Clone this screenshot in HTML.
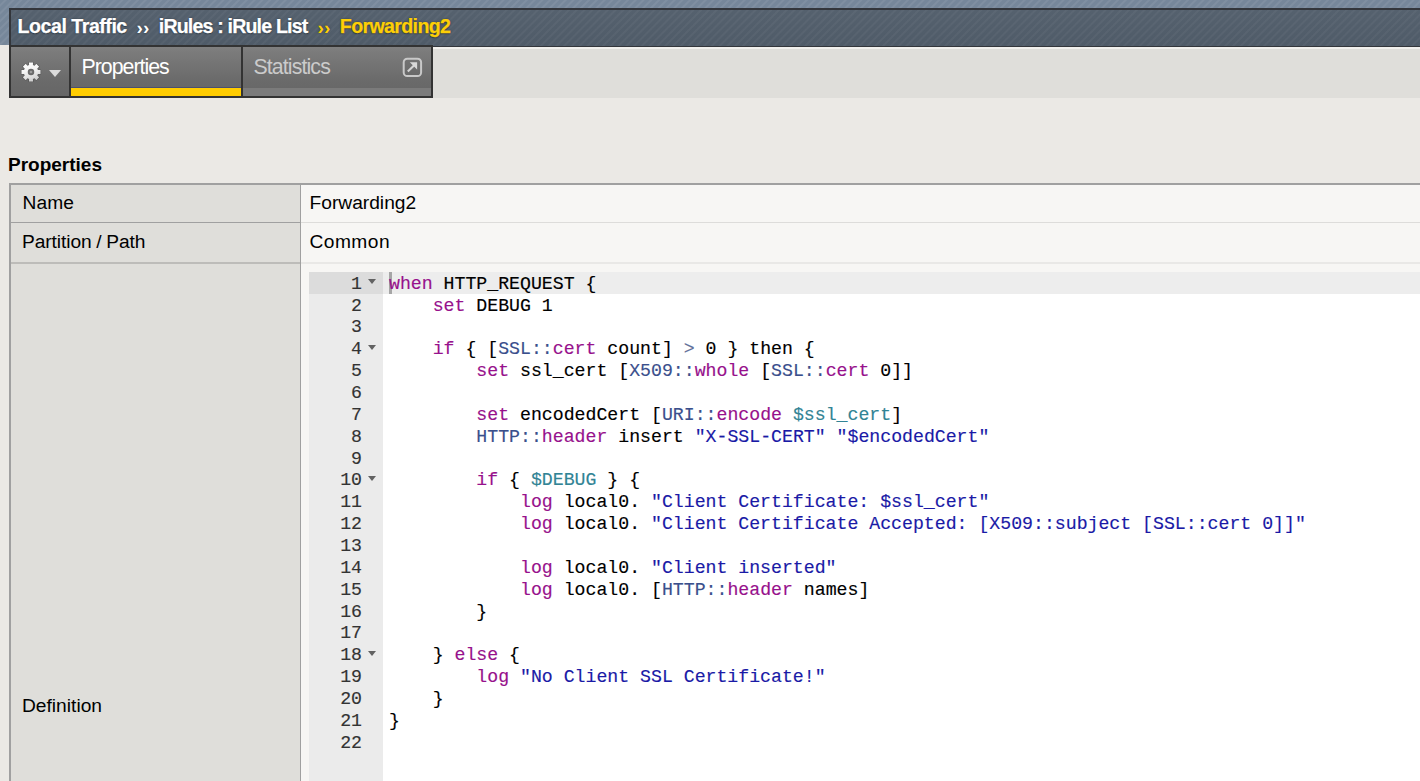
<!DOCTYPE html>
<html>
<head>
<meta charset="utf-8">
<title>iRule Properties</title>
<style>
html,body{margin:0;padding:0;}
html{overflow:hidden;}
body{width:1420px;height:781px;overflow:hidden;position:relative;background:#ebe9e5;font-family:"Liberation Sans",sans-serif;color:#000;}
.abs{position:absolute;}
/* top striped background */
#topbg{left:0;top:0;width:1420px;height:45px;background-color:#76879a;
 background-image:repeating-linear-gradient(135deg,rgba(255,255,255,0) 0,rgba(255,255,255,0) 2.5px,rgba(255,255,255,.07) 3.5px,rgba(255,255,255,.07) 4.5px,rgba(255,255,255,0) 5.5px);}
#titlebar{left:9px;top:8px;width:1420px;height:36px;border:2px solid #33363b;border-right:none;box-sizing:content-box;
 background-color:#525e6b;
 background-image:repeating-linear-gradient(135deg,rgba(255,255,255,0) 0,rgba(255,255,255,0) 2.5px,rgba(255,255,255,.04) 3.5px,rgba(255,255,255,.04) 4.5px,rgba(255,255,255,0) 5.5px),linear-gradient(#55616e,#4f5b68);}
.crumb{-webkit-text-stroke:0.25px currentColor;text-shadow:0 0 2px #2e3944,0 1px 1px #2e3944;top:14px;height:24px;line-height:24px;font-weight:bold;font-size:19.6px;white-space:nowrap;color:#fff;letter-spacing:-0.75px;}
.crumb.y{color:#fdcf06;}
.sep{text-shadow:0 0 2px #2e3944;top:15.5px;height:24px;line-height:24px;font-weight:bold;font-size:19px;white-space:nowrap;color:#fff;letter-spacing:0.2px;}
.sep.y{color:#fdcf06;}
/* tab strip */
#tabstrip{left:11px;top:47px;width:1409px;height:51px;background:#dfdeda;border-top:2px solid #f1f0ed;box-sizing:border-box;}
#tabs{left:9px;top:45px;width:424px;height:53px;background:#333;}
.tab{top:2px;height:49px;background:linear-gradient(#808080 0,#7b7b7b 10%,#6a6a6a 70%,#666 100%);}
.tab .lbl{position:absolute;top:8.1px;font-size:21.3px;line-height:24px;white-space:nowrap;letter-spacing:-0.98px;}
.tab .bar{position:absolute;left:0;right:0;bottom:0;height:8px;}
/* properties */
#ptitle{left:8px;top:153px;font-weight:bold;font-size:19px;line-height:24px;white-space:nowrap;}
#tbl{left:9px;top:183px;width:1420px;height:700px;background:#a0a0a0;}
.lc{position:absolute;left:2px;width:289px;background:#dfdeda;}
.vc{position:absolute;left:292px;width:1130px;background:#f7f6f4;}
.ct{position:absolute;font-size:19.2px;line-height:24px;white-space:nowrap;}
/* editor */
#gutter{left:309px;top:272px;width:74px;height:520px;background:#ebebeb;}
#editor{left:383px;top:272px;width:1040px;height:520px;background:#fff;}
.ln,.cl{position:absolute;height:21.857px;line-height:21.857px;font-family:"Liberation Mono",monospace;font-size:18.2px;white-space:pre;-webkit-text-stroke:0.15px currentColor;}
.ln{left:0;width:53px;text-align:right;color:#333;}
.cl{left:6px;color:#000;}
.k{color:#97118c;}
.f{color:#3a4f8c;}
.s{color:#1a1aa6;}
.v{color:#318495;}
.o{color:#5f6f9a;}
.fold{position:absolute;left:59px;width:0;height:0;border-left:4.5px solid transparent;border-right:4.5px solid transparent;border-top:5.5px solid #626262;}
</style>
</head>
<body>
<div id="topbg" class="abs"></div>
<div id="titlebar" class="abs"></div>
<div class="abs crumb" style="left:17.6px;letter-spacing:-0.48px" id="c1">Local Traffic</div>
<div class="abs sep" style="left:136.5px" id="s1">&#8250;&#8250;</div>
<div class="abs crumb" style="left:158.8px;letter-spacing:-0.83px" id="c2">iRules : iRule List</div>
<div class="abs sep y" style="left:317.5px" id="s2">&#8250;&#8250;</div>
<div class="abs crumb y" style="left:339.8px;letter-spacing:-0.64px" id="c3">Forwarding2</div>

<div id="tabstrip" class="abs"></div>
<div id="tabs" class="abs">
  <div class="abs tab" style="left:2px;width:58px;" id="geartab">
    <svg class="abs" style="left:8.25px;top:12.9px" width="24" height="24" viewBox="-12 -12 24 24">
      <defs><linearGradient id="gg" x1="0" y1="0" x2="0.3" y2="1"><stop offset="0" stop-color="#ffffff"/><stop offset="0.5" stop-color="#f4f4f4"/><stop offset="1" stop-color="#d2d2d2"/></linearGradient></defs>
      <path d="M-1.92 -6.94 L-2.02 -9.49 L2.02 -9.49 L1.92 -6.94 L3.55 -6.27 L5.28 -8.14 L8.14 -5.28 L6.27 -3.55 L6.94 -1.92 L9.49 -2.02 L9.49 2.02 L6.94 1.92 L6.27 3.55 L8.14 5.28 L5.28 8.14 L3.55 6.27 L1.92 6.94 L2.02 9.49 L-2.02 9.49 L-1.92 6.94 L-3.55 6.27 L-5.28 8.14 L-8.14 5.28 L-6.27 3.55 L-6.94 1.92 L-9.49 2.02 L-9.49 -2.02 L-6.94 -1.92 L-6.27 -3.55 L-8.14 -5.28 L-5.28 -8.14 L-3.55 -6.27Z" fill="url(#gg)" stroke="rgba(40,40,40,.35)" stroke-width="1.2" stroke-linejoin="round" paint-order="stroke"/>
      <circle r="2.3" fill="#9c9c9c" stroke="#6a6a6a" stroke-width="1.9"/>
    </svg>
    <div class="abs" style="left:38.2px;top:23px;width:0;height:0;border-left:6.25px solid transparent;border-right:6.25px solid transparent;border-top:7.4px solid #dcdcdc;"></div>
  </div>
  <div class="abs tab" style="left:62px;width:170px;" id="proptab">
    <div class="lbl" style="left:10.5px;color:#fff;" id="t1">Properties</div>
    <div class="bar" style="background:#ffcc00;border-top:1px solid #4a5070;height:8px;"></div>
  </div>
  <div class="abs tab" style="left:234px;width:188px;" id="stattab">
    <div class="lbl" style="left:10.5px;color:#cbcbcb;letter-spacing:-0.88px" id="t2">Statistics</div>
    <div class="bar" style="background:#7b7b7b;"></div>
    <svg class="abs" style="left:158px;top:9px" width="24" height="24" viewBox="0 0 24 24">
      <rect x="2.7" y="2.7" width="17.4" height="17.4" rx="3.6" fill="rgba(0,0,0,.03)" stroke="#c9c9c9" stroke-width="2"/>
      <path d="M6.8 15.6 L13.2 9.3" stroke="#d4d4d4" stroke-width="2.1" fill="none"/>
      <path d="M8.8 6.3 L16.1 6.3 L16.1 13.4 Z" fill="#d8d8d8"/>
    </svg>
  </div>
</div>

<div id="ptitle" class="abs">Properties</div>
<div id="tbl" class="abs">
  <div class="lc" style="top:2px;height:37px;"></div>
  <div class="lc" style="top:40px;height:39px;"></div>
  <div class="lc" style="top:81px;height:640px;"></div>
  <div class="abs" style="left:2px;top:79px;width:289px;height:2px;background:#bdbcb9"></div>
  <div class="vc" style="top:2px;height:37px;"></div>
  <div class="vc" style="top:40px;height:39px;"></div>
  <div class="vc" style="top:81px;height:640px;"></div>
  <div class="abs" style="left:292px;top:39px;width:1130px;height:1px;background:#dddcda"></div>
  <div class="abs" style="left:292px;top:79px;width:1130px;height:2px;background:#e9e8e6"></div>
</div>
<div class="ct" style="left:22.5px;top:191px;letter-spacing:0.1px" id="n1">Name</div>
<div class="ct" style="left:22px;top:230px;letter-spacing:-0.08px;word-spacing:-0.6px" id="n2">Partition / Path</div>
<div class="ct" style="left:22px;top:694px" id="n3">Definition</div>
<div class="ct" style="left:309.5px;top:191px" id="v1">Forwarding2</div>
<div class="ct" style="left:309.5px;top:230px;letter-spacing:0.45px" id="v2">Common</div>

<div id="gutter" class="abs">
<div class="abs" style="left:0;top:0;width:74px;height:21.857px;background:#dcdcdc"></div>
<div class="ln" style="top:1.700px">1</div>
<div class="fold" style="top:7.300px"></div>
<div class="ln" style="top:23.557px">2</div>
<div class="ln" style="top:45.414px">3</div>
<div class="ln" style="top:67.271px">4</div>
<div class="fold" style="top:72.871px"></div>
<div class="ln" style="top:89.128px">5</div>
<div class="ln" style="top:110.985px">6</div>
<div class="ln" style="top:132.842px">7</div>
<div class="ln" style="top:154.699px">8</div>
<div class="ln" style="top:176.556px">9</div>
<div class="ln" style="top:198.413px">10</div>
<div class="fold" style="top:204.013px"></div>
<div class="ln" style="top:220.270px">11</div>
<div class="ln" style="top:242.127px">12</div>
<div class="ln" style="top:263.984px">13</div>
<div class="ln" style="top:285.841px">14</div>
<div class="ln" style="top:307.698px">15</div>
<div class="ln" style="top:329.555px">16</div>
<div class="ln" style="top:351.412px">17</div>
<div class="ln" style="top:373.269px">18</div>
<div class="fold" style="top:378.869px"></div>
<div class="ln" style="top:395.126px">19</div>
<div class="ln" style="top:416.983px">20</div>
<div class="ln" style="top:438.840px">21</div>
<div class="ln" style="top:460.697px">22</div>
</div>
<div id="editor" class="abs">
<div class="abs" style="left:0;top:0;width:1040px;height:21.857px;background:#ededed"></div>
<div class="abs" style="left:6px;top:0px;width:2.6px;height:21.8px;background:#a6a6a6"></div>
<div class="cl" style="top:1.700px"><span class="k">when</span> HTTP_REQUEST {</div>
<div class="cl" style="top:23.557px">    <span class="k">set</span> DEBUG 1</div>
<div class="cl" style="top:67.271px">    <span class="k">if</span> { [<span class="f">SSL::</span><span class="k">cert</span> count] <span class="o">&gt;</span> 0 } then {</div>
<div class="cl" style="top:89.128px">        <span class="k">set</span> ssl_cert [<span class="f">X509::</span><span class="k">whole</span> [<span class="f">SSL::</span><span class="k">cert</span> 0]]</div>
<div class="cl" style="top:132.842px">        <span class="k">set</span> encodedCert [<span class="f">URI::</span><span class="k">encode</span> <span class="v">$ssl_cert</span>]</div>
<div class="cl" style="top:154.699px">        <span class="f">HTTP::</span><span class="k">header</span> insert <span class="s">"X-SSL-CERT"</span> <span class="s">"$encodedCert"</span></div>
<div class="cl" style="top:198.413px">        <span class="k">if</span> { <span class="v">$DEBUG</span> } {</div>
<div class="cl" style="top:220.270px">            <span class="k">log</span> local0. <span class="s">"Client Certificate: $ssl_cert"</span></div>
<div class="cl" style="top:242.127px">            <span class="k">log</span> local0. <span class="s">"Client Certificate Accepted: [X509::subject [SSL::cert 0]]"</span></div>
<div class="cl" style="top:285.841px">            <span class="k">log</span> local0. <span class="s">"Client inserted"</span></div>
<div class="cl" style="top:307.698px">            <span class="k">log</span> local0. [<span class="f">HTTP::</span><span class="k">header</span> names]</div>
<div class="cl" style="top:329.555px">        }</div>
<div class="cl" style="top:373.269px">    } <span class="k">else</span> {</div>
<div class="cl" style="top:395.126px">        <span class="k">log</span> <span class="s">"No Client SSL Certificate!"</span></div>
<div class="cl" style="top:416.983px">    }</div>
<div class="cl" style="top:438.840px">}</div>
</div>
</body>
</html>
